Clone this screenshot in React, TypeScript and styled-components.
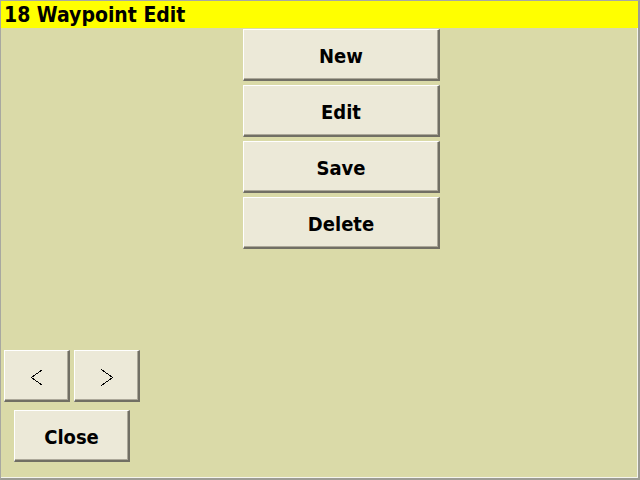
import React from "react";
import styled, { createGlobalStyle } from "styled-components";

const Global = createGlobalStyle`
  html, body { margin: 0; padding: 0; background: #dadaa8; }
  body { font-family: "DejaVu Sans Condensed", "DejaVu Sans", sans-serif; }
`;

const Window = styled.div`
  box-sizing: border-box;
  width: 640px;
  height: 480px;
  background: #dadaa8;
  border-top: 1px solid #a8a8a0;
  border-left: 1px solid #a8a8a0;
  border-right: 2px solid #9c9c94;
  border-bottom: 2px solid #9c9c94;
  box-shadow: inset -1px -1px 0 #f4f4ec;
  display: flex;
  flex-direction: column;
`;

const TitleBar = styled.div`
  height: 27px;
  background: #ffff00;
  color: #000;
  font-family: "DejaVu Sans Condensed", "DejaVu Sans", sans-serif;
  font-weight: bold;
  font-size: 21px;
  line-height: 29px;
  padding-left: 3px;
  white-space: nowrap;
  overflow: hidden;
`;

const Menu = styled.div`
  display: flex;
  flex-direction: column;
  gap: 4px;
  margin: 1px 0 0 242px;
`;

const Button = styled.button<{ $w: number }>`
  box-sizing: border-box;
  width: ${(p) => p.$w}px;
  height: 52px;
  padding: 3px 0 0 0;
  margin: 0;
  background: #ece9d8;
  border: none;
  border-top: 1px solid #ffffff;
  border-left: 1px solid #ffffff;
  border-right: 2px solid #716f64;
  border-bottom: 2px solid #716f64;
  box-shadow: inset -1px -1px 0 #aca899;
  font-family: "DejaVu Sans Condensed", "DejaVu Sans", sans-serif;
  font-weight: bold;
  font-size: 20px;
  color: #000;
  display: flex;
  align-items: center;
  justify-content: center;
`;

const Bottom = styled.div`
  margin-top: auto;
  display: flex;
  flex-direction: column;
  gap: 8px;
  padding: 0 0 16px 3px;
`;

const NavRow = styled.div`
  display: flex;
  gap: 4px;
`;

const CloseWrap = styled.div`
  padding-left: 10px;
`;

const Chevron = ({ dir }: { dir: "l" | "r" }) => (
  <svg width="12" height="17" viewBox="0 0 12 17">
    <polyline
      points={dir === "l" ? "11.5,0.5 0.5,8.5 11.5,16.5" : "0.5,0.5 11.5,8.5 0.5,16.5"}
      fill="none"
      stroke="#000"
      strokeWidth="1"
      shapeRendering="crispEdges"
    />
  </svg>
);

export default function App() {
  return (
    <>
      <Global />
      <Window>
        <TitleBar>18 Waypoint Edit</TitleBar>
        <Menu>
          <Button $w={197}>New</Button>
          <Button $w={197}>Edit</Button>
          <Button $w={197}>Save</Button>
          <Button $w={197}>Delete</Button>
        </Menu>
        <Bottom>
          <NavRow>
            <Button $w={66}><Chevron dir="l" /></Button>
            <Button $w={66}><Chevron dir="r" /></Button>
          </NavRow>
          <CloseWrap>
            <Button $w={116}>Close</Button>
          </CloseWrap>
        </Bottom>
      </Window>
    </>
  );
}
